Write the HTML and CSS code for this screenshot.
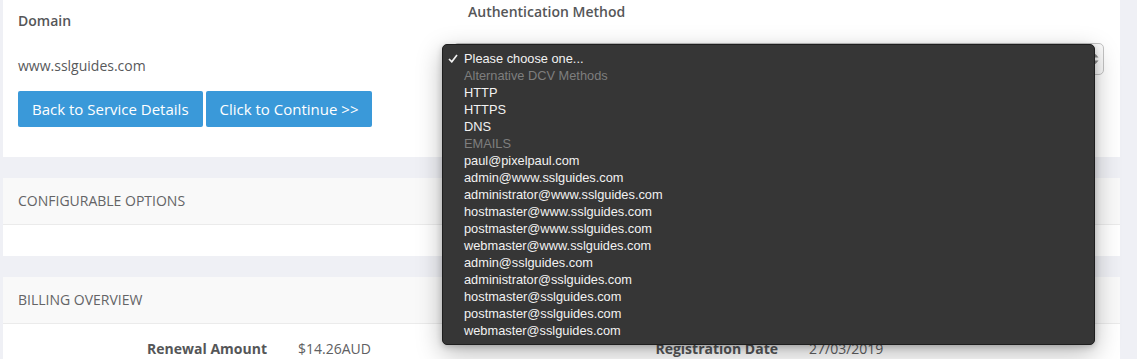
FILE: index.html
```html
<!DOCTYPE html>
<html>
<head>
<meta charset="utf-8">
<link rel="stylesheet" href="styles.css">
</head>
<body>
<div class="page">
  <section class="panel panel-form">
    <div class="form-grid">
      <div class="col-left">
        <div class="label domain-label">Domain</div>
        <div class="domain-value">www.sslguides.com</div>
        <div class="buttons">
          <button class="btn">Back to Service Details</button>
          <button class="btn">Click to Continue &gt;&gt;</button>
        </div>
      </div>
      <div class="col-right">
        <div class="label auth-label">Authentication Method</div>
        <div class="select-wrap">
          <div class="select">
            <svg class="arrows" width="7" height="12" viewBox="0 0 7 12"><path d="M3.5 1 L6.5 4.5 H0.5 Z M3.5 11 L6.5 7.5 H0.5 Z" fill="#888"/></svg>
          </div>
          <div class="menu">
            <div class="item checked"><svg class="check" width="10" height="9" viewBox="0 0 10 9"><path d="M1 5 L3.8 7.8 L9 1" fill="none" stroke="#f2f2f2" stroke-width="1.7"/></svg>Please choose one...</div>
            <div class="item group">Alternative DCV Methods</div>
            <div class="item">HTTP</div>
            <div class="item">HTTPS</div>
            <div class="item">DNS</div>
            <div class="item group">EMAILS</div>
            <div class="item">paul@pixelpaul.com</div>
            <div class="item">admin@www.sslguides.com</div>
            <div class="item">administrator@www.sslguides.com</div>
            <div class="item">hostmaster@www.sslguides.com</div>
            <div class="item">postmaster@www.sslguides.com</div>
            <div class="item">webmaster@www.sslguides.com</div>
            <div class="item">admin@sslguides.com</div>
            <div class="item">administrator@sslguides.com</div>
            <div class="item">hostmaster@sslguides.com</div>
            <div class="item">postmaster@sslguides.com</div>
            <div class="item">webmaster@sslguides.com</div>
          </div>
        </div>
      </div>
    </div>
  </section>

  <section class="panel">
    <div class="panel-head">CONFIGURABLE OPTIONS</div>
    <div class="panel-body small"></div>
  </section>

  <section class="panel last">
    <div class="panel-head">BILLING OVERVIEW</div>
    <div class="panel-body billing">
      <div class="b-label">Renewal Amount</div>
      <div class="b-value">$14.26AUD</div>
      <div class="b-label">Registration Date</div>
      <div class="b-value">27/03/2019</div>
    </div>
  </section>
</div>
</body>
</html>
```

FILE: styles.css
```css
html, body {
  margin: 0;
  padding: 0;
  background: #eff0f5;
  font-family: "Open Sans", "Liberation Sans", sans-serif;
  font-size: 14px;
  color: #58595b;
  overflow: hidden;
}

.page {
  width: 1117px;
  padding-left: 3px;
}

.panel {
  background: #fff;
  margin-bottom: 21px;
}

.panel.last {
  margin-bottom: 0;
}

.panel-form {
  height: 157px;
  padding: 0 16px 0 15px;
  box-sizing: border-box;
}

.form-grid {
  display: grid;
  grid-template-columns: 435px 1fr;
}

.label {
  font-weight: 600;
  color: #555658;
  line-height: 20px;
}

.domain-label {
  margin-top: 11px;
}

.domain-value {
  margin-top: 25px;
  line-height: 20px;
}

.buttons {
  display: flex;
  gap: 3px;
  margin-top: 15px;
}

.btn {
  font-family: "Open Sans", "Liberation Sans", sans-serif;
  font-size: 15px;
  color: #fff;
  background: #3a99d9;
  border: none;
  border-radius: 2px;
  height: 36px;
  padding: 0 14px;
  line-height: 36px;
}

.auth-label {
  margin-top: 2px;
  padding-left: 15px;
}

.select-wrap {
  position: relative;
  margin-top: 21px;
}

.select {
  height: 32px;
  box-sizing: border-box;
  border: 1px solid #c4c4c4;
  border-radius: 5px;
  background: #fafafa;
  display: flex;
  justify-content: flex-end;
  align-items: center;
  padding-right: 4px;
}

.menu {
  position: absolute;
  left: -11px;
  top: 1px;
  width: 653px;
  box-sizing: border-box;
  padding: 5px 0;
  background: #363636;
  border: 1px solid #1e1e1e;
  border-radius: 5px;
  box-shadow: 0 8px 26px rgba(0, 0, 0, 0.28), 0 2px 6px rgba(0, 0, 0, 0.2);
  font-family: "Liberation Sans", Arial, sans-serif;
  font-size: 12.8px;
  color: #f2f2f2;
}

.item {
  position: relative;
  height: 17px;
  line-height: 17px;
  padding-left: 21px;
  white-space: nowrap;
}

.item.group {
  color: #7e7e7e;
}

.check {
  position: absolute;
  left: 5px;
  top: 4px;
}

.panel-head {
  height: 46px;
  line-height: 46px;
  padding-left: 15px;
  background: #f9f9f9;
  border-bottom: 1px solid #ebebeb;
  color: #646466;
  font-size: 14px;
}

.panel-body.small {
  height: 31px;
}

.billing {
  display: grid;
  grid-template-columns: 280px 231px 280px 1fr;
  padding: 15px 0 0 15px;
  line-height: 20px;
}

.b-label {
  font-weight: 700;
  color: #555658;
  text-align: right;
  padding-right: 31px;
}

.b-value {
  color: #606062;
}
```
